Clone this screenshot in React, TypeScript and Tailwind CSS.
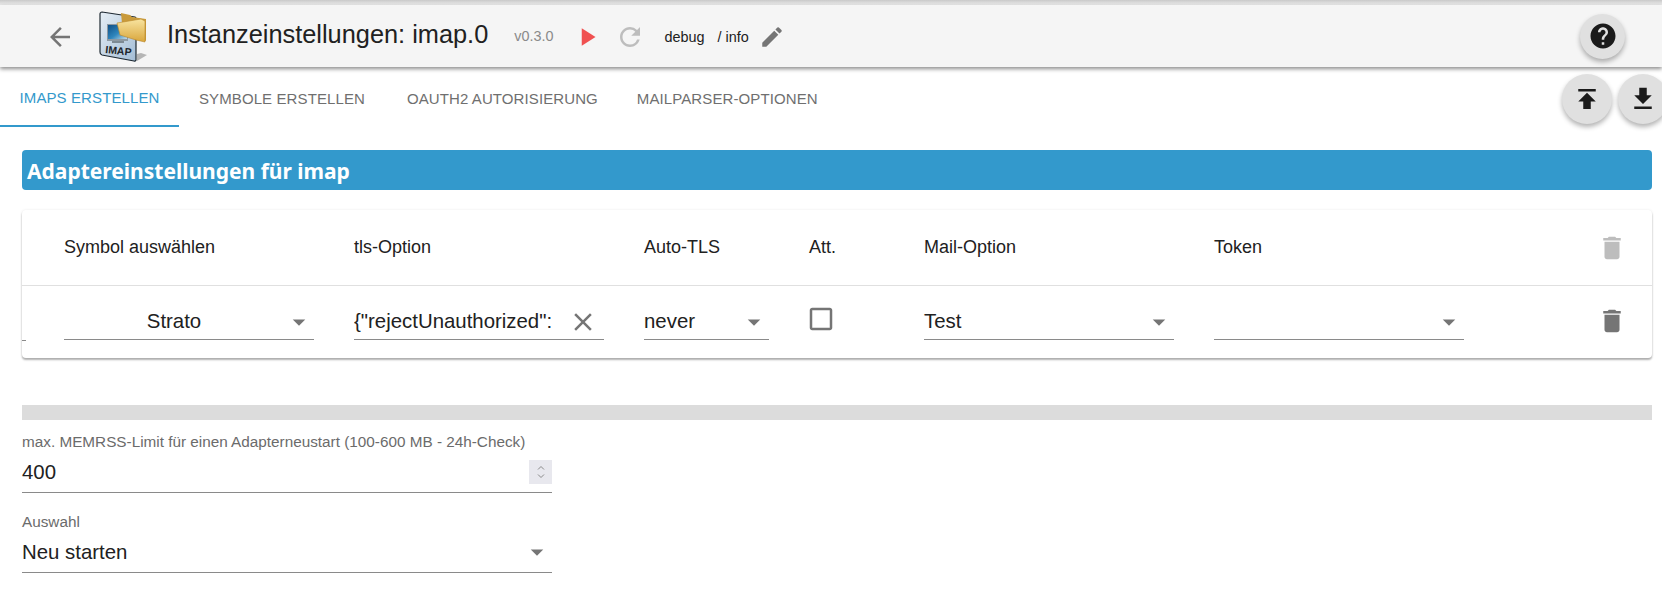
const Caret = () => (
  <svg width="30" height="30" viewBox="0 0 24 24" className="fill-[#757575] shrink-0">
    <path d="M7 10l5 5 5-5z" />
  </svg>
);

const TrashIcon = ({ className }: { className: string }) => (
  <svg width="30" height="30" viewBox="0 0 24 24" className={className}>
    <path d="M6 19c0 1.1.9 2 2 2h8c1.1 0 2-.9 2-2V7H6v12zM19 4h-3.5l-1-1h-5l-1 1H5v2h14V4z" />
  </svg>
);

const ImapIcon = () => (
  <svg width="52" height="54" viewBox="0 0 52 54" className="shrink-0">
    <defs>
      <linearGradient id="page" x1="0" y1="0" x2="1" y2="1">
        <stop offset="0" stopColor="#e6eef5" />
        <stop offset="1" stopColor="#a3bdd6" />
      </linearGradient>
      <linearGradient id="screen" x1="0" y1="0" x2="1" y2="1">
        <stop offset="0" stopColor="#0f4f86" />
        <stop offset="0.55" stopColor="#2f86bd" />
        <stop offset="1" stopColor="#c4dbe9" />
      </linearGradient>
      <linearGradient id="folder" x1="0" y1="0" x2="0" y2="1">
        <stop offset="0" stopColor="#f8e4a0" />
        <stop offset="1" stopColor="#d9a63c" />
      </linearGradient>
    </defs>
    <path d="M39 52l10-6-6-2-4 1z" fill="#b5b5b5" />
    <path d="M4 3l33 5a2 2 0 0 1 1 2v41a1.500 1.500 0 0 1-2 1L4 46a3 3 0 0 1-2-3V5a2 2 0 0 1 2-2z" fill="url(#page)" stroke="#1f2a33" strokeWidth="1.2" />
    <rect x="9" y="15" width="21" height="17" fill="#8d99a3" />
    <rect x="10" y="16" width="19" height="14" fill="url(#screen)" />
    <rect x="14" y="32" width="12" height="2" fill="#7d8a94" />
    <text x="7" y="44" fontFamily="Liberation Sans, sans-serif" fontWeight="700" fontSize="10.5" fill="#1e262c" transform="rotate(6 7 44)">IMAP</text>
    <path d="M23 4l9 2 2 2 14 2v22l-23-7z" fill="#c99a3a" />
    <path d="M19 14l24-4 4 2v21l-9-2-16-5z" fill="url(#folder)" stroke="#b8862a" strokeWidth="0.6" />
  </svg>
);

const App = () => {
  return (
    <div className="w-[1662px] h-[601px] overflow-hidden bg-white font-['Liberation_Sans',sans-serif] text-[#212121]">
      <div className="h-[5px] bg-gradient-to-b from-[#c9c9c9] to-[#eeeeee]" />
      <header className="relative z-10 flex h-[62px] items-center bg-[#f5f5f5] pl-[45px] pr-[37px] shadow-[0_2px_4px_rgba(0,0,0,0.45)]">
        <svg width="30" height="30" viewBox="0 0 24 24" className="fill-[#757575] shrink-0 mr-[23px] mt-[1px]">
          <path d="M20 11H7.83l5.59-5.59L12 4l-8 8 8 8 1.41-1.41L7.83 13H20v-2z" />
        </svg>
        <ImapIcon />
        <h1 className="ml-[17px] text-[25.35px] leading-none whitespace-nowrap mb-[2px]">Instanzeinstellungen: imap.0</h1>
        <span className="ml-[26px] mt-[2px] text-[14.4px] text-[#8a8a8a]">v0.3.0</span>
        <svg width="30" height="30" viewBox="0 0 24 24" className="ml-[20px] mt-[2px] fill-[#f05050] shrink-0">
          <path d="M8 5v14l11-7z" transform="translate(-1 0)" />
        </svg>
        <svg width="30" height="30" viewBox="0 0 24 24" className="ml-[12px] mt-[2px] fill-[#bdbdbd] shrink-0">
          <path d="M17.65 6.35A7.958 7.958 0 0 0 12 4c-4.42 0-7.99 3.58-7.99 8s3.57 8 7.99 8c3.73 0 6.84-2.55 7.73-6h-2.08A5.99 5.99 0 0 1 12 18c-3.31 0-6-2.69-6-6s2.69-6 6-6c1.66 0 3.14.69 4.22 1.78L13 11h7V4l-2.35 2.35z" />
        </svg>
        <span className="ml-[19px] mt-[3px] text-[14.4px]">debug</span>
        <span className="ml-[13px] mt-[3px] text-[14.4px]">/ info</span>
        <svg width="26" height="26" viewBox="0 0 24 24" className="ml-[10px] mt-[2px] fill-[#757575] shrink-0">
          <path d="M3 17.25V21h3.75L17.81 9.94l-3.75-3.75L3 17.25zM20.71 7.04a.996.996 0 0 0 0-1.41l-2.34-2.34a.996.996 0 0 0-1.41 0l-1.83 1.83 3.75 3.75 1.83-1.83z" />
        </svg>
        <button className="ml-auto flex h-[45px] w-[45px] items-center justify-center rounded-full bg-[#e0e0e0] shadow-[0_3px_5px_rgba(0,0,0,0.3)]">
          <svg width="30" height="30" viewBox="0 0 24 24" className="fill-[#1a1a1a]">
            <path d="M12 2C6.48 2 2 6.48 2 12s4.48 10 10 10 10-4.48 10-10S17.52 2 12 2zm1 17h-2v-2h2v2zm2.07-7.75l-.9.92C13.45 12.9 13 13.5 13 15h-2v-.5c0-1.1.45-2.1 1.17-2.83l1.24-1.26c.37-.36.59-.86.59-1.41 0-1.1-.9-2-2-2s-2 .9-2 2H8c0-2.21 1.79-4 4-4s4 1.79 4 4c0 .88-.36 1.68-.93 2.25z" />
          </svg>
        </button>
      </header>

      <nav className="relative flex h-[60px] text-[15px] tracking-[0.1px] text-[#6f6f6f]">
        <div className="flex w-[179px] items-center justify-center border-b-2 border-[#3399cc] pt-[5px] text-[#3399cc]">IMAPS ERSTELLEN</div>
        <div className="ml-[20px] flex items-center pt-[4px]">SYMBOLE ERSTELLEN</div>
        <div className="ml-[42px] flex items-center pt-[4px]">OAUTH2 AUTORISIERUNG</div>
        <div className="ml-[39px] flex items-center pt-[4px]">MAILPARSER-OPTIONEN</div>
        <div className="absolute right-[-6px] top-[7px] flex gap-[6px] text-[#1a1a1a]">
          <button className="flex h-[50px] w-[50px] items-center justify-center rounded-full bg-[#e0e0e0] shadow-[0_3px_5px_rgba(0,0,0,0.3)]">
            <svg width="30" height="30" viewBox="0 0 24 24" className="fill-[#1a1a1a]">
              <path d="M5 4v2h14V4H5zm0 10h4v6h6v-6h4l-7-7-7 7z" />
            </svg>
          </button>
          <button className="flex h-[50px] w-[50px] items-center justify-center rounded-full bg-[#e0e0e0] shadow-[0_3px_5px_rgba(0,0,0,0.3)]">
            <svg width="30" height="30" viewBox="0 0 24 24" className="fill-[#1a1a1a]">
              <path d="M19 9h-4V3H9v6H5l7 7 7-7zM5 18v2h14v-2H5z" />
            </svg>
          </button>
        </div>
      </nav>

      <main className="pl-[22px] pr-[10px]">
        <div className="mt-[23px] flex h-[40px] items-center rounded-[4px] bg-[#3399cc] pl-[5px] pt-[4px] font-['Noto_Sans',sans-serif] text-[21px] font-bold text-white">
          Adaptereinstellungen für imap
        </div>

        <section className="relative mt-[20px] h-[148px] rounded-[4px] bg-white shadow-[0_2px_2px_rgba(0,0,0,0.3),0_0_3px_rgba(0,0,0,0.08)]">
          <div className="grid h-[76px] grid-cols-[290px_290px_165px_115px_290px_1fr] items-center border-b border-[#e0e0e0] pl-[42px] text-[18px]">
            <span>Symbol auswählen</span>
            <span>tls-Option</span>
            <span>Auto-TLS</span>
            <span>Att.</span>
            <span>Mail-Option</span>
            <div className="flex items-center justify-between pr-[25px]">
              <span>Token</span>
              <TrashIcon className="fill-[#bdbdbd]" />
            </div>
          </div>
          <div className="grid grid-cols-[290px_290px_165px_115px_290px_1fr] items-start pl-[42px] pt-[18px] text-[20.4px]">
            <div className="flex h-[36px] w-[250px] items-center border-b border-[#8a8a8a]">
              <span className="flex-1 text-center">Strato</span>
              <Caret />
            </div>
            <div className="flex h-[36px] w-[250px] items-center border-b border-[#8a8a8a]">
              <span className="flex-1 overflow-hidden whitespace-nowrap">{'{"rejectUnauthorized":'}</span>
              <svg width="30" height="30" viewBox="0 0 24 24" className="ml-[7px] mr-[6px] fill-[#757575] shrink-0">
                <path d="M19 6.41L17.59 5 12 10.59 6.41 5 5 6.41 10.59 12 5 17.59 6.41 19 12 13.41 17.59 19 19 17.59 13.41 12z" />
              </svg>
            </div>
            <div className="flex h-[36px] w-[125px] items-center border-b border-[#8a8a8a]">
              <span className="flex-1">never</span>
              <Caret />
            </div>
            <svg width="30" height="30" viewBox="0 0 24 24" className="fill-[#757575] -ml-[3px]">
              <path d="M19 5v14H5V5h14m0-2H5c-1.1 0-2 .9-2 2v14c0 1.1.9 2 2 2h14c1.1 0 2-.9 2-2V5c0-1.1-.9-2-2-2z" />
            </svg>
            <div className="flex h-[36px] w-[250px] items-center border-b border-[#8a8a8a]">
              <span className="flex-1">Test</span>
              <Caret />
            </div>
            <div className="flex items-start justify-between pr-[25px]">
              <div className="flex h-[36px] w-[250px] items-center justify-end border-b border-[#8a8a8a]">
                <Caret />
              </div>
              <TrashIcon className="fill-[#757575] mt-[2px]" />
            </div>
          </div>
          <div className="absolute bottom-[17px] left-0 h-px w-[4px] bg-[#8a8a8a]" />
        </section>

        <div className="mt-[47px] h-[15px] bg-[#dcdcdc]" />

        <div className="w-[530px]">
          <label className="mt-[13px] block text-[15.3px] leading-[18px] text-[#6b6b6b]">
            max. MEMRSS-Limit für einen Adapterneustart (100-600 MB - 24h-Check)
          </label>
          <div className="flex h-[42px] items-center justify-between border-b border-[#8a8a8a] text-[20.4px]">
            <span className="mt-[2px]">400</span>
            <div className="flex h-[24px] w-[23px] flex-col items-center justify-center bg-[#e8e8ee]">
              <svg width="10" height="8" viewBox="0 0 10 8" className="stroke-[#8a8a8a] fill-none">
                <path d="M2 5.5l3-3 3 3" />
              </svg>
              <svg width="10" height="8" viewBox="0 0 10 8" className="stroke-[#8a8a8a] fill-none">
                <path d="M2 2.5l3 3 3-3" />
              </svg>
            </div>
          </div>
          <label className="mt-[20px] block text-[15.3px] leading-[18px] text-[#6b6b6b]">Auswahl</label>
          <div className="flex h-[42px] items-center justify-between border-b border-[#8a8a8a] text-[20.4px]">
            <span className="mt-[2px]">Neu starten</span>
            <Caret />
          </div>
        </div>
      </main>
    </div>
  );
};

export default App;
